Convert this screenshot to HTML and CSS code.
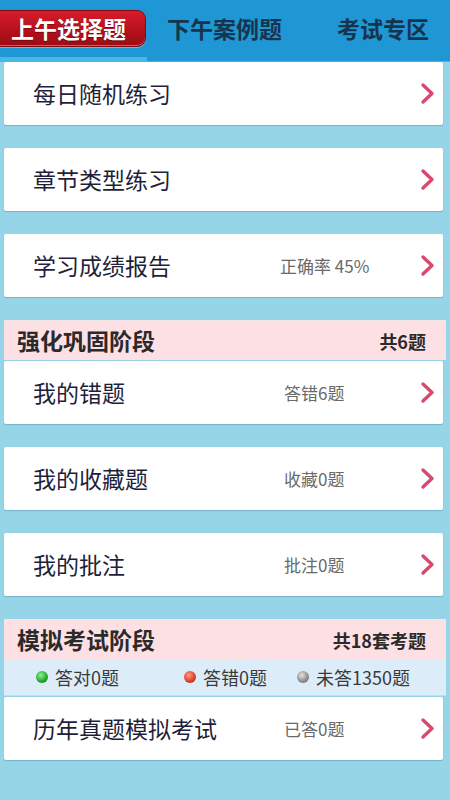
FILE: index.html
```html
<!DOCTYPE html>
<html lang="zh">
<head>
<meta charset="utf-8">
<link rel="stylesheet" href="styles.css">
</head>
<body>
<div class="app">
  <div class="tabbar">
    <div class="tab active"><span class="pill">上午选择题</span></div>
    <div class="tab"><span class="label">下午案例题</span></div>
    <div class="tab"><span class="label">考试专区</span></div>
  </div>

  <div class="content">
    <div class="card">
      <span class="title">每日随机练习</span>
      <span class="info"></span>
      <svg class="chev" viewBox="0 0 15 23"><path d="M3 3 L12 11.5 L3 20" /></svg>
    </div>
    <div class="card">
      <span class="title">章节类型练习</span>
      <span class="info"></span>
      <svg class="chev" viewBox="0 0 15 23"><path d="M3 3 L12 11.5 L3 20" /></svg>
    </div>
    <div class="card">
      <span class="title">学习成绩报告</span>
      <span class="info wide">正确率 45%</span>
      <svg class="chev" viewBox="0 0 15 23"><path d="M3 3 L12 11.5 L3 20" /></svg>
    </div>

    <div class="group">
      <div class="section"><span>强化巩固阶段</span><span>共6题</span></div>
      <div class="card tight">
        <span class="title">我的错题</span>
        <span class="info">答错6题</span>
        <svg class="chev" viewBox="0 0 15 23"><path d="M3 3 L12 11.5 L3 20" /></svg>
      </div>
    </div>
    <div class="card">
      <span class="title">我的收藏题</span>
      <span class="info">收藏0题</span>
      <svg class="chev" viewBox="0 0 15 23"><path d="M3 3 L12 11.5 L3 20" /></svg>
    </div>
    <div class="card">
      <span class="title">我的批注</span>
      <span class="info">批注0题</span>
      <svg class="chev" viewBox="0 0 15 23"><path d="M3 3 L12 11.5 L3 20" /></svg>
    </div>

    <div class="group">
      <div class="section"><span>模拟考试阶段</span><span>共18套考题</span></div>
      <div class="stats">
        <span class="stat"><i class="dot green"></i>答对0题</span>
        <span class="stat"><i class="dot red"></i>答错0题</span>
        <span class="stat"><i class="dot gray"></i>未答1350题</span>
      </div>
      <div class="card tight">
        <span class="title">历年真题模拟考试</span>
        <span class="info">已答0题</span>
        <svg class="chev" viewBox="0 0 15 23"><path d="M3 3 L12 11.5 L3 20" /></svg>
      </div>
    </div>
  </div>
</div>
</body>
</html>
```

FILE: styles.css
```css
* { box-sizing: border-box; }
html, body {
  margin: 0;
  padding: 0;
  background: #96d5e8;
  font-family: "Noto Sans CJK SC", "Noto Sans", sans-serif;
}
.app {
  width: 450px;
  height: 800px;
  overflow: hidden;
  background: #96d5e8;
}
.tabbar {
  height: 62px;
  background: #1f97d5;
  display: grid;
  grid-template-columns: 147px 1fr 1fr;
  border-bottom: 1px solid #4ab3e2;
}
.tab {
  display: flex;
  align-items: center;
  padding-bottom: 5px;
}
.tab.active {
  justify-content: flex-start;
  align-items: stretch;
  padding: 10px 1px 0 0;
  flex-direction: column;
}
.tab.active::after {
  content: "";
  display: block;
  height: 5px;
  margin-top: 10px;
  margin-right: -1px;
  background: #48b6e6;
}
.pill {
  height: 37px;
  margin-left: -8px;
  padding-left: 18px;
  display: flex;
  align-items: center;
  color: #fff;
  font-size: 23px;
  line-height: 1;
  font-weight: 700;
  border-radius: 0 9px 9px 0;
  background: linear-gradient(#d81c2a, #b3101b 60%, #9c0c16);
  border: 1px solid #7d0a12;
  box-shadow: 0 1px 0 #6fb6dd, inset 0 -1px 0 #e05561;
  text-shadow: 0 1px 1px rgba(0,0,0,0.35);
}
.label {
  color: #17344f;
  font-size: 23px;
  line-height: 1;
  font-weight: 700;
}
.tab:nth-child(2) { justify-content: flex-start; padding-left: 20px; }
.tab:nth-child(3) { justify-content: flex-end; padding-right: 21px; }

.content {
  padding: 0 7px 0 4px;
  display: flex;
  flex-direction: column;
  gap: 23px;
}
.card {
  height: 63px;
  background: #fff;
  border-radius: 2px;
  box-shadow: 0 1px 1px rgba(60, 110, 140, 0.35);
  display: grid;
  grid-template-columns: 1fr 124px 15px;
  column-gap: 12px;
  align-items: center;
  padding: 0 8px 0 29px;
}
.title {
  font-size: 23px;
  line-height: 1;
  color: #1f1f3a;
  white-space: nowrap;
}
.info {
  font-size: 17px;
  line-height: 1;
  color: #6a6a6a;
  white-space: nowrap;
}
.info.wide { margin-left: -4px; }
.chev {
  width: 15px;
  height: 23px;
  fill: none;
  stroke: #d9486f;
  stroke-width: 3.4;
  stroke-linecap: round;
  stroke-linejoin: round;
}
.group {
  display: flex;
  flex-direction: column;
}
.section {
  height: 40px;
  background: #fde0e4;
  border-top: 1px solid #f2e6e9;
  display: flex;
  justify-content: space-between;
  align-items: center;
  padding: 0 20px 0 13px;
  font-weight: 700;
  line-height: 1;
  color: #2a2a2a;
  margin-right: -3px;
}
.section span:first-child { font-size: 23px; }
.section span:last-child { font-size: 18px; }
.stats {
  height: 37px;
  background: #dcedf9;
  border-bottom: 1px solid #c9dbe8;
  display: grid;
  grid-template-columns: 148px 113px 1fr;
  align-items: center;
  padding-left: 32px;
  margin-right: -3px;
  font-size: 18px;
  line-height: 1;
  color: #3a3a3a;
}
.stat {
  display: flex;
  align-items: center;
  gap: 7px;
  white-space: nowrap;
}
.dot {
  width: 12px;
  height: 12px;
  border-radius: 50%;
  display: inline-block;
  flex: none;
}
.dot.green { background: radial-gradient(circle at 40% 35%, #8ef08e, #1fa52a 60%, #0d6e16); }
.dot.red { background: radial-gradient(circle at 40% 35%, #ff9b8a, #dd3a22 60%, #9b1a0c); }
.dot.gray { background: radial-gradient(circle at 40% 35%, #e4e4e4, #8a8a8a 60%, #555); }
.card.tight { margin-top: 1px; }
```
